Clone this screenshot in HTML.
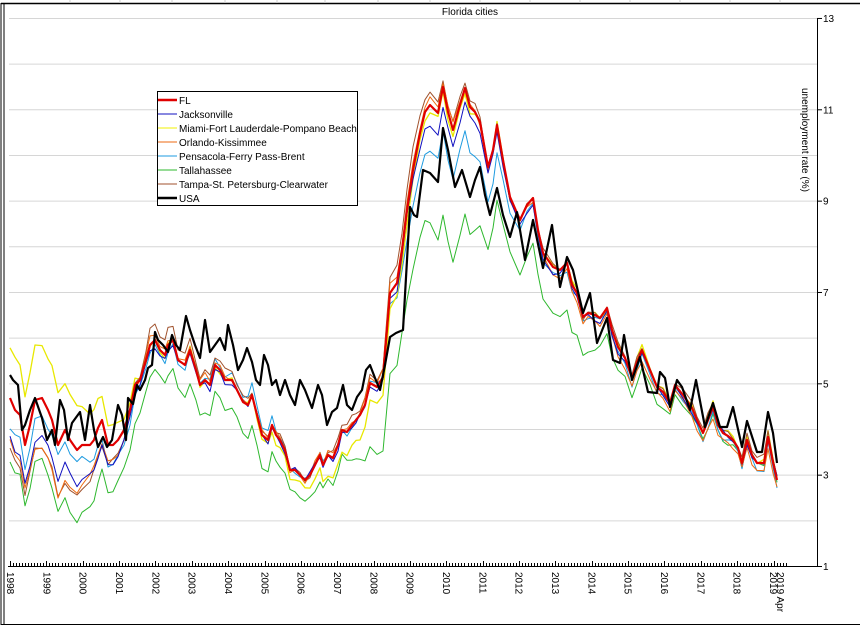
<!DOCTYPE html>
<html><head><meta charset="utf-8"><style>
html,body{margin:0;padding:0;background:#fff;}
svg{display:block;}
text{font-family:"Liberation Sans",sans-serif;font-size:10px;fill:#000;}
</style></head><body>
<svg id="s" width="860" height="626" xmlns="http://www.w3.org/2000/svg">
<rect x="0" y="0" width="860" height="626" fill="#fff"/>
<g id="grid" stroke="#d6d6d6" stroke-width="1"></g>
<g id="frame" fill="none" stroke="#000">
<line x1="1" y1="3" x2="1" y2="625" stroke-width="1"/>
<line x1="4" y1="4" x2="4" y2="625" stroke-width="1"/>
<line x1="1" y1="3.5" x2="860" y2="3.5" stroke-width="1.5"/>
<line x1="1" y1="624.5" x2="860" y2="624.5" stroke-width="1"/>
<line x1="817.5" y1="18" x2="817.5" y2="566" stroke-width="1"/>
<line x1="8" y1="566.5" x2="822" y2="566.5" stroke-width="1"/>
</g>
<g id="topticks" stroke="#cfcfcf"></g>
<g id="axes" stroke="#000"></g>
<g id="labels"></g>
<text x="470" y="15" text-anchor="middle">Florida cities</text>
<text transform="translate(802,88) rotate(90)" font-size="9.5">unemployment rate (%)</text>
<g id="series" fill="none" stroke-linejoin="round"></g>
<g id="legend"></g>
</svg>
<script>
var NS="http://www.w3.org/2000/svg";
function el(p,t,a,txt){var e=document.createElementNS(NS,t);for(var k in a)e.setAttribute(k,a[k]);if(txt!=null)e.textContent=txt;document.getElementById(p).appendChild(e);return e;}
function Y(v){return 566-(v-1)*45.67;}
for(var v=2;v<=13;v++){el('grid','line',{x1:9,x2:817,y1:Y(v)+.5,y2:Y(v)+.5});}
[70,120,172,225,277,325,378,430,480,530,580,630,680,730,780].forEach(function(x){el('topticks','line',{x1:x,x2:x,y1:0,y2:3});});
for(var v=1;v<=13;v+=2){el('axes','line',{x1:817,x2:822,y1:Y(v)+.5,y2:Y(v)+.5});el('labels','text',{x:823,y:Y(v)+4},String(v));}
for(var i=0;i<=256;i++){var x=Math.round(10+i*3.03)+.5;el('axes','line',{x1:x,x2:x,y1:i%12==0?561:563,y2:566,'stroke-width':1});}
for(var k=0;k<=21;k++){var x=10+k*36.33;el('labels','text',{transform:'translate('+(x-3)+',572) rotate(90)','font-size':'9'},String(1998+k));}
el('labels','text',{transform:'translate(777,572) rotate(90)','font-size':'9'},'2019 Apr');
var usa=[[10,375],[13,380],[18,385],[22,430],[25,425],[30,410],[35,398],[42,418],[47,440],[52,430],[55,445],[60,400],[64,410],[68,440],[72,423],[80,412],[85,440],[90,405],[94,430],[98,447],[103,437],[107,447],[112,440],[118,405],[122,415],[126,440],[128,398],[133,404],[137,385],[140,390],[145,380],[148,368],[152,365],[155,332],[158,340],[163,345],[168,352],[172,335],[176,345],[180,350],[186,316],[190,330],[195,345],[200,358],[205,320],[210,352],[215,345],[220,338],[225,350],[228,325],[233,345],[238,370],[243,360],[247,348],[252,362],[256,380],[260,385],[264,355],[268,365],[272,385],[276,380],[280,395],[285,380],[290,395],[295,405],[300,380],[305,390],[312,408],[318,385],[322,395],[327,425],[332,412],[337,408],[343,385],[347,405],[352,410],[357,397],[362,390],[366,370],[370,365],[375,378],[380,390],[385,365],[390,337],[396,333],[403,330],[407,260],[410,207],[414,215],[417,217],[423,170],[430,173],[438,182],[443,128],[448,150],[455,187],[462,170],[470,197],[475,180],[480,167],[485,195],[490,215],[497,188],[503,215],[510,237],[517,212],[525,260],[533,220],[543,268],[552,225],[560,287],[567,257],[573,270],[583,313],[590,293],[597,343],[607,318],[613,360],[620,363],[624,335],[632,380],[640,357],[648,392],[657,393],[660,372],[665,378],[670,407],[677,380],[682,387],[690,410],[696,380],[705,427],[713,403],[720,427],[727,427],[733,407],[742,447],[747,421],[757,452],[762,452],[768,412],[773,433],[777,463]];
var fl=[[10,398],[15,410],[20,415],[25,445],[30,425],[35,400],[42,398],[48,410],[52,420],[58,445],[65,430],[70,440],[77,450],[82,445],[90,445],[94,440],[98,428],[102,420],[108,445],[113,445],[118,440],[124,430],[130,410],[135,385],[140,380],[146,360],[150,345],[155,340],[160,350],[165,355],[168,345],[173,340],[178,360],[185,365],[190,350],[196,370],[200,385],[205,380],[210,385],[215,365],[220,370],[225,380],[232,380],[237,390],[243,402],[248,405],[252,395],[257,415],[262,435],[268,440],[272,425],[276,435],[280,440],[285,450],[290,470],[295,470],[300,475],[305,480],[310,475],[315,465],[320,455],[323,465],[328,455],[333,458],[338,445],[342,430],[347,432],[352,425],[356,420],[360,415],[365,405],[370,383],[377,387],[383,377],[390,293],[397,283],[402,250],[407,210],[413,170],[420,133],[425,112],[430,105],[438,113],[443,87],[448,112],[453,130],[460,105],[465,88],[470,107],[475,112],[480,122],[488,167],[493,150],[497,125],[503,160],[510,197],[520,220],[527,205],[533,198],[538,230],[543,253],[553,267],[560,270],[567,263],[572,285],[577,293],[583,317],[588,313],[595,315],[600,318],[607,308],[612,330],[618,347],[625,358],[632,378],[637,362],[642,350],[650,370],[657,387],[663,392],[670,403],[675,385],[683,395],[692,408],[697,420],[703,433],[708,420],[713,407],[718,425],[723,433],[728,436],[733,440],[738,448],[742,463],[747,440],[752,455],[757,463],[764,463],[768,437],[773,462],[777,480]];
function interp(o,x){for(var i=0;i<o.length-1;i++){if(x<=o[i+1][0]){var t=(x-o[i][0])/(o[i+1][0]-o[i][0]);return o[i][1]+t*(o[i+1][1]-o[i][1]);}}return o[o.length-1][1];}
function derive(o,seed){return fl.map(function(p,i){var n=Math.sin(i*1.7+seed)*2.5+Math.sin(i*0.53+seed*2)*2;return [p[0],p[1]+interp(o,p[0])+n];});}
var S=[
 ['#2eb82e',1,[[10,60],[80,70],[120,40],[150,30],[200,30],[270,30],[300,20],[350,30],[370,60],[383,75],[400,85],[425,110],[445,130],[470,130],[490,80],[510,55],[545,45],[560,50],[600,30],[650,15],[700,8],[780,0]],1],
 ['#1e9be0',1,[[10,30],[60,10],[100,20],[140,10],[250,-10],[300,0],[380,0],[420,40],[450,50],[480,40],[520,10],[560,5],[780,5]],2],
 ['#e8e800',1.3,[[10,-50],[40,-55],[70,-45],[90,-35],[110,-20],[140,0],[240,0],[300,10],[360,25],[380,15],[420,10],[450,5],[500,0],[780,-3]],3],
 ['#a0522d',1,[[10,50],[70,50],[110,20],[150,-15],[300,0],[380,-10],[410,-20],[440,-10],[500,0],[780,-5]],4],
 ['#ee6a10',1,[[10,45],[70,50],[110,15],[150,-5],[300,0],[380,-5],[420,-8],[480,0],[600,8],[780,8]],5],
 ['#1010c0',1,[[10,40],[80,35],[110,20],[140,5],[300,0],[410,5],[430,25],[470,10],[520,5],[780,0]],6]
];
function pl(pts,c,w){el('series','polyline',{points:pts.map(function(p){return p[0]+','+p[1].toFixed(1)}).join(' '),stroke:c,'stroke-width':w});}
S.forEach(function(s){pl(derive(s[2],s[3]),s[0],s[1]);});
pl(fl,'#e00000',2.2);
pl(usa,'#000',2.2);
el('legend','rect',{x:157.5,y:91.5,width:200,height:114,fill:'#fff',stroke:'#000','stroke-width':1});
var L=[['FL','#e00000',2.5],['Jacksonville','#1010c0',1],['Miami-Fort Lauderdale-Pompano Beach','#f0f000',1],['Orlando-Kissimmee','#ee6a10',1],['Pensacola-Ferry Pass-Brent','#1e9be0',1],['Tallahassee','#2eb82e',1],['Tampa-St. Petersburg-Clearwater','#a0522d',1],['USA','#000',2.5]];
L.forEach(function(l,i){var y=100+i*14;el('legend','line',{x1:158,x2:177,y1:y,y2:y,stroke:l[1],'stroke-width':l[2]});el('legend','text',{x:179,y:y+4,'font-size':'9.5'},l[0]);});
</script>
</body></html>
